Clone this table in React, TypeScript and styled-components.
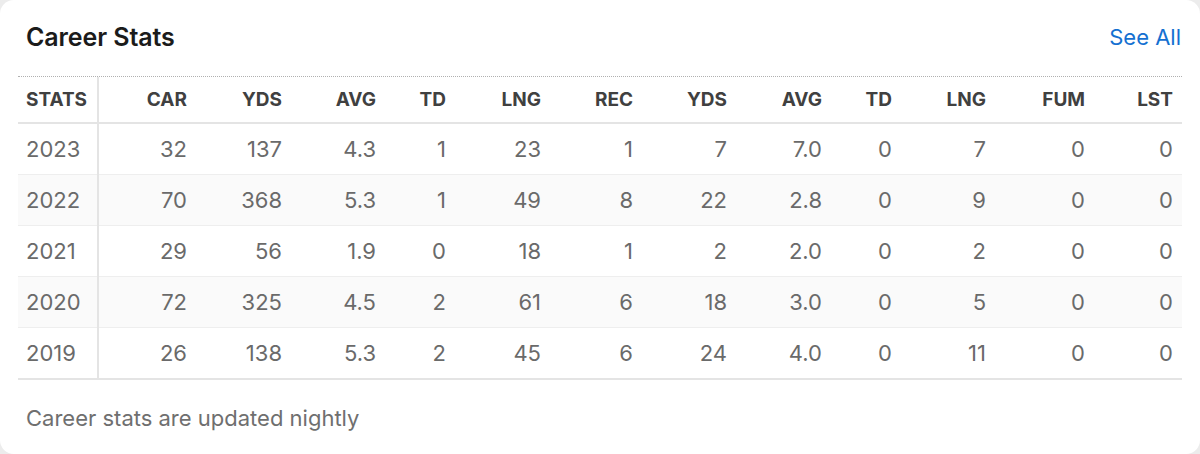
import React from 'react';
import styled, { createGlobalStyle } from 'styled-components';

const GlobalStyle = createGlobalStyle`
  html, body {
    margin: 0;
    padding: 0;
    background: #ececec;
  }
  body {
    font-family: Inter, "Noto Sans", "Liberation Sans", sans-serif;
    -webkit-font-smoothing: antialiased;
  }
`;

const Card = styled.section`
  box-sizing: border-box;
  width: 1200px;
  height: 454px;
  background: #ffffff;
  border-radius: 14px;
  padding: 0 18px;
  display: flex;
  flex-direction: column;
`;

const Header = styled.header`
  box-sizing: border-box;
  display: flex;
  align-items: center;
  justify-content: space-between;
  padding: 0 1px 2px 8px;
  height: 77px;
  border-bottom: 1px dotted #b0b0b0;
`;

const Title = styled.h2`
  margin: 0;
  font-size: 25px;
  font-weight: 600;
  color: #1b1b1b;
  letter-spacing: -0.1px;
`;

const SeeAll = styled.a`
  font-size: 22px;
  color: #1470d1;
  text-decoration: none;
  cursor: pointer;
`;

const Table = styled.table`
  width: 100%;
  border-collapse: collapse;
  table-layout: fixed;
`;

const HeadCell = styled.th<{ $first?: boolean }>`
  height: 45px;
  padding: 0 9px 0 8px;
  font-size: 19px;
  font-weight: 700;
  color: #404040;
  text-align: ${(p) => (p.$first ? 'left' : 'right')};
  border-bottom: 2px solid #e4e4e4;
  border-right: ${(p) => (p.$first ? '2px solid #e4e4e4' : 'none')};
`;

const Row = styled.tr<{ $shade: boolean }>`
  background: ${(p) => (p.$shade ? '#fafafa' : '#ffffff')};
  border-bottom: 1px solid #eeeeee;
  &:last-child {
    border-bottom: 2px solid #e4e4e4;
  }
`;

const Cell = styled.td<{ $first?: boolean }>`
  height: 50px;
  padding: 0 9px 0 8px;
  font-size: 22px;
  font-weight: 400;
  color: #6a6a6a;
  text-align: ${(p) => (p.$first ? 'left' : 'right')};
  border-right: ${(p) => (p.$first ? '2px solid #e4e4e4' : 'none')};
`;

const Footer = styled.p`
  margin: 0;
  padding: 25px 8px 0;
  font-size: 22px;
  line-height: 26px;
  color: #6f6f6f;
`;

const columns = ['STATS', 'CAR', 'YDS', 'AVG', 'TD', 'LNG', 'REC', 'YDS', 'AVG', 'TD', 'LNG', 'FUM', 'LST'];
const widths = [80, 98, 95, 94, 70, 95, 92, 94, 95, 70, 94, 99, 88];

const seasons: string[][] = [
  ['2023', '32', '137', '4.3', '1', '23', '1', '7', '7.0', '0', '7', '0', '0'],
  ['2022', '70', '368', '5.3', '1', '49', '8', '22', '2.8', '0', '9', '0', '0'],
  ['2021', '29', '56', '1.9', '0', '18', '1', '2', '2.0', '0', '2', '0', '0'],
  ['2020', '72', '325', '4.5', '2', '61', '6', '18', '3.0', '0', '5', '0', '0'],
  ['2019', '26', '138', '5.3', '2', '45', '6', '24', '4.0', '0', '11', '0', '0'],
];

export default function App() {
  return (
    <>
      <GlobalStyle />
      <Card>
        <Header>
          <Title>Career Stats</Title>
          <SeeAll>See All</SeeAll>
        </Header>
        <Table>
          <colgroup>
            {widths.map((w, i) => (
              <col key={i} style={{ width: w }} />
            ))}
          </colgroup>
          <thead>
            <tr>
              {columns.map((c, i) => (
                <HeadCell key={i} $first={i === 0}>
                  {c}
                </HeadCell>
              ))}
            </tr>
          </thead>
          <tbody>
            {seasons.map((row, r) => (
              <Row key={row[0]} $shade={r % 2 === 1}>
                {row.map((v, i) => (
                  <Cell key={i} $first={i === 0}>
                    {v}
                  </Cell>
                ))}
              </Row>
            ))}
          </tbody>
        </Table>
        <Footer>Career stats are updated nightly</Footer>
      </Card>
    </>
  );
}
